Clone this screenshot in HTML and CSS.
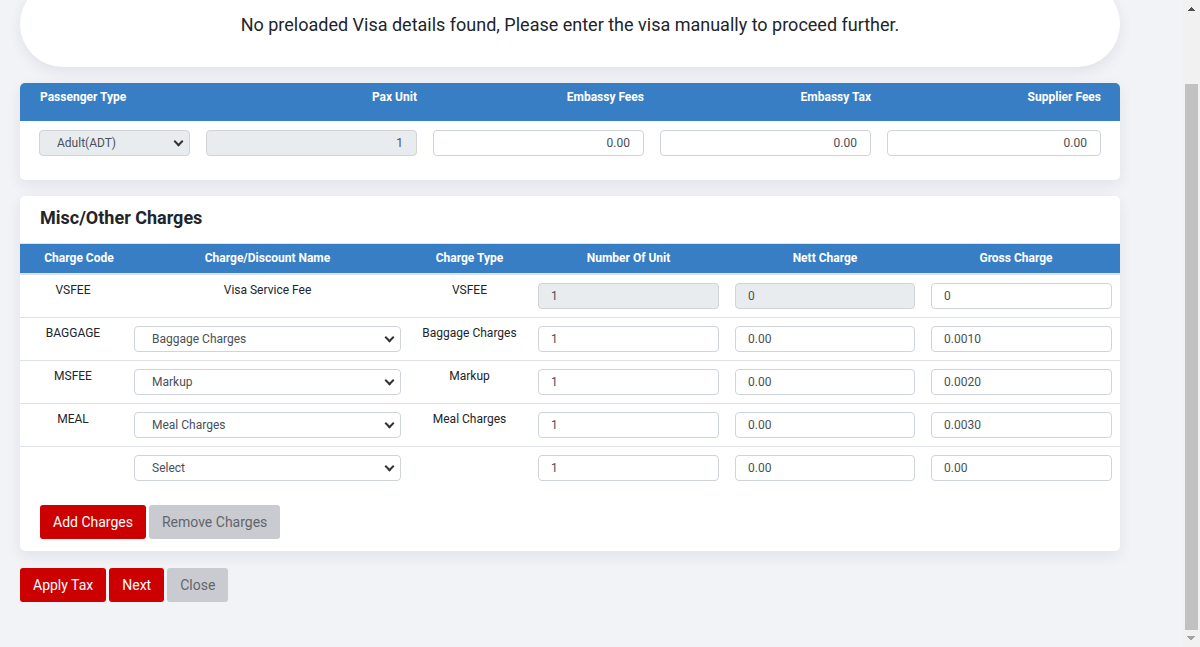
FILE: index.html
```html
<!DOCTYPE html>
<html lang="en">
<head>
<meta charset="utf-8">
<title>Visa Charges</title>
<link rel="stylesheet" href="styles.css">
</head>
<body>
<div class="window">
<div class="viewport">
  <div class="page">
    <div class="notice">No preloaded Visa details found, Please enter the visa manually to proceed further.</div>

    <div class="card fees">
      <div class="fees-head">
        <div class="lbl left">Passenger Type</div>
        <div class="lbl">Pax Unit</div>
        <div class="lbl">Embassy Fees</div>
        <div class="lbl">Embassy Tax</div>
        <div class="lbl">Supplier Fees</div>
      </div>
      <div class="fees-body">
        <span class="sel-wrap"><select class="ctl sel disabled" disabled><option>Adult(ADT)</option></select></span>
        <input class="ctl num right disabled" value="1" disabled>
        <input class="ctl num right" value="0.00">
        <input class="ctl num right" value="0.00">
        <input class="ctl num right" value="0.00">
      </div>
    </div>

    <div class="card misc">
      <h2 class="misc-title">Misc/Other Charges</h2>
      <table class="charges">
        <colgroup>
          <col class="c1"><col class="c2"><col class="c3"><col class="c4"><col class="c5"><col class="c6">
        </colgroup>
        <thead>
          <tr>
            <th class="first">Charge Code</th>
            <th>Charge/Discount Name</th>
            <th>Charge Type</th>
            <th>Number Of Unit</th>
            <th>Nett Charge</th>
            <th class="last">Gross Charge</th>
          </tr>
        </thead>
        <tbody>
          <tr>
            <td class="txt">VSFEE</td>
            <td class="txt">Visa Service Fee</td>
            <td class="txt">VSFEE</td>
            <td><input class="ctl num disabled" value="1" disabled></td>
            <td><input class="ctl num disabled" value="0" disabled></td>
            <td><input class="ctl num" value="0"></td>
          </tr>
          <tr>
            <td class="txt">BAGGAGE</td>
            <td><span class="sel-wrap"><select class="ctl sel"><option>Baggage Charges</option></select></span></td>
            <td class="txt">Baggage Charges</td>
            <td><input class="ctl num" value="1"></td>
            <td><input class="ctl num" value="0.00"></td>
            <td><input class="ctl num" value="0.0010"></td>
          </tr>
          <tr>
            <td class="txt">MSFEE</td>
            <td><span class="sel-wrap"><select class="ctl sel"><option>Markup</option></select></span></td>
            <td class="txt">Markup</td>
            <td><input class="ctl num" value="1"></td>
            <td><input class="ctl num" value="0.00"></td>
            <td><input class="ctl num" value="0.0020"></td>
          </tr>
          <tr>
            <td class="txt">MEAL</td>
            <td><span class="sel-wrap"><select class="ctl sel"><option>Meal Charges</option></select></span></td>
            <td class="txt">Meal Charges</td>
            <td><input class="ctl num" value="1"></td>
            <td><input class="ctl num" value="0.00"></td>
            <td><input class="ctl num" value="0.0030"></td>
          </tr>
          <tr>
            <td class="txt"></td>
            <td><span class="sel-wrap"><select class="ctl sel"><option>Select</option></select></span></td>
            <td class="txt"></td>
            <td><input class="ctl num" value="1"></td>
            <td><input class="ctl num" value="0.00"></td>
            <td><input class="ctl num" value="0.00"></td>
          </tr>
        </tbody>
      </table>
      <div class="btn-row inner">
        <button class="btn red">Add Charges</button>
        <button class="btn gray">Remove Charges</button>
      </div>
    </div>

    <div class="btn-row">
      <button class="btn red">Apply Tax</button>
      <button class="btn red">Next</button>
      <button class="btn gray">Close</button>
    </div>
  </div>
</div>
<div class="scrollbar" aria-hidden="true">
  <div class="sb-btn up"></div>
  <div class="sb-gap"></div>
  <div class="sb-thumb"></div>
  <div class="sb-btn down"></div>
</div>
</div>
<script src="script.js"></script>
</body>
</html>
```

FILE: styles.css
```css
html, body {
  margin: 0;
  padding: 0;
  height: 100%;
  overflow: hidden;
}
body {
  font-family: Roboto, "Liberation Sans", Arial, sans-serif;
  color: #212529;
  background: #f2f3f7;
}
.window {
  display: flex;
  height: 647px;
}
.viewport {
  flex: 1;
  min-width: 0;
  height: 647px;
  overflow-y: scroll;
  background: #f2f3f7;
  scrollbar-width: none;
}
.viewport::-webkit-scrollbar {
  display: none;
}
.scrollbar {
  width: 17px;
  flex: none;
  background: #f1f1f1;
  display: flex;
  flex-direction: column;
}
.sb-btn {
  height: 17px;
  flex: none;
  background-repeat: no-repeat;
  background-size: 8px 4px;
}
.sb-btn.up {
  background-position: 4px 7px;
  background-image: conic-gradient(from 135deg at 50% 0, #505050 0 90deg, transparent 90deg);
}
.sb-btn.down {
  background-position: 4px 6px;
  background-image: conic-gradient(from -45deg at 50% 100%, #a3a3a3 0 90deg, transparent 90deg);
}
.sb-gap {
  height: 67px;
  flex: none;
}
.sb-thumb {
  flex: 1;
  margin: 0 2px;
  background: #c1c1c1;
}
.page {
  padding: 60px 63px 45px 20px;
  display: flex;
  flex-direction: column;
}
.notice {
  height: 86px;
  background: #fff;
  border-radius: 50px;
  box-shadow: 0 5px 14px rgba(30, 40, 70, 0.08);
  display: flex;
  align-items: center;
  justify-content: center;
  font-size: 18px;
  color: #212529;
  margin-bottom: 16px;
}
.card {
  background: #fff;
  border-radius: 5px;
  box-shadow: 0 5px 14px rgba(30, 40, 70, 0.08);
  overflow: hidden;
}
.fees {
  margin-bottom: 16px;
}
.fees-head, .fees-body {
  display: grid;
  grid-template-columns: 151px 211px 211px 211px 1fr;
  column-gap: 16px;
  padding: 0 19px;
}
.fees-head {
  background: #377ec4;
  height: 38px;
  box-sizing: border-box;
  padding-top: 6px;
}
.lbl {
  color: #fff;
  font-weight: 700;
  font-size: 12px;
  line-height: 16px;
  text-align: right;
}
.lbl.left {
  text-align: left;
  padding-left: 1px;
}
.fees-body {
  padding-top: 9px;
  padding-bottom: 24px;
  align-items: center;
}
.ctl {
  box-sizing: border-box;
  width: 100%;
  height: 26px;
  border: 1px solid #ced4da;
  border-radius: 4px;
  background: #fff;
  font-family: Roboto, "Liberation Sans", Arial, sans-serif;
  font-size: 12px;
  color: #495057;
  margin: 0;
  display: block;
}
.ctl.disabled {
  background: #e9ecef;
  opacity: 1;
}
.num {
  padding: 0 12px;
}
.num.right {
  text-align: right;
  padding-right: 13px;
}
.sel-wrap {
  position: relative;
  display: block;
}
.sel {
  appearance: none;
  -webkit-appearance: none;
  padding: 0 24px 0 17px;
}
.sel-wrap::after {
  content: "";
  position: absolute;
  right: 8px;
  top: 8px;
  width: 5px;
  height: 5px;
  border-right: 2px solid #333;
  border-bottom: 2px solid #333;
  transform: rotate(45deg);
  pointer-events: none;
}
.misc {
  margin-bottom: 17px;
}
.misc-title {
  margin: 0;
  height: 47px;
  box-sizing: border-box;
  padding: 11px 0 0 20px;
  font-size: 18px;
  line-height: 21px;
  font-weight: 700;
  color: #212529;
}
.charges {
  width: 100%;
  border-collapse: collapse;
  table-layout: fixed;
}
.c1 { width: 106px; }
.c2 { width: 283px; }
.c3 { width: 121px; }
.c4 { width: 197px; }
.c5 { width: 196px; }
.c6 { width: 197px; }
.charges th {
  background: #377ec4;
  color: #fff;
  font-size: 12px;
  font-weight: 700;
  height: 30px;
  padding: 0 8px;
  text-align: center;
  border-top: 1px solid #dfe3e8;
  border-bottom: 2px solid #dee2e6;
  box-sizing: border-box;
}
.charges th.first {
  padding-left: 20px;
}
.charges th.last {
  padding-right: 19px;
}
.charges td {
  padding: 8px;
  vertical-align: top;
  border-top: 1px solid #dee2e6;
}
.charges tbody tr:first-child td {
  border-top: none;
}
.charges td.txt {
  text-align: center;
  font-size: 12px;
  line-height: 14px;
  color: #212529;
}
.btn-row {
  display: flex;
  gap: 3px;
}
.btn-row.inner {
  padding: 16px 20px 12px;
}
.btn {
  height: 34px;
  padding: 0 13px;
  border: none;
  border-radius: 3px;
  font-family: Roboto, "Liberation Sans", Arial, sans-serif;
  font-size: 14px;
  cursor: pointer;
}
.btn.red {
  background: #cc0000;
  color: #fff;
}
.btn.gray {
  background: #cacbd0;
  color: #62656c;
}
```

FILE: script.js
```js
var v = document.querySelector('.viewport');
v.scrollTop = v.scrollHeight;
```
